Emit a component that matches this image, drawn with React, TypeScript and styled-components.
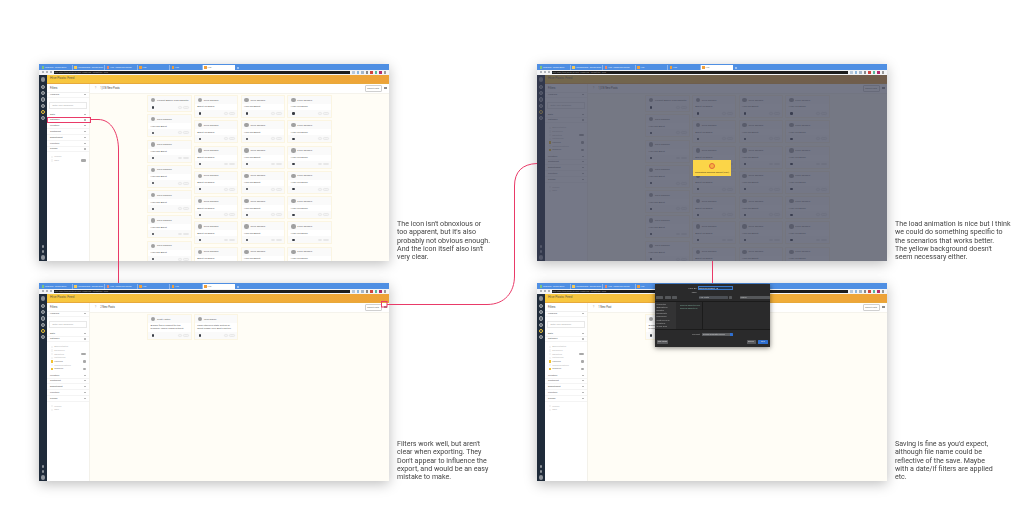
import React from 'react';
import styled, { createGlobalStyle } from 'styled-components';

const GlobalStyle = createGlobalStyle`
  html, body {
    margin: 0;
    padding: 0;
    background: #fff;
    font-family: "Roboto", "Liberation Sans", sans-serif;
  }
`;

const Page = styled.div`
  position: relative;
  width: 1029px;
  height: 514px;
  overflow: hidden;
  box-sizing: border-box;
  padding: 64px 0 0 39px;
  display: grid;
  grid-template-columns: 350px 148px 350px 142px;
  grid-template-rows: 197px 198px;
  row-gap: 22px;
`;

const Note = styled.p`
  margin: 0;
  align-self: end;
  padding-left: 8px;
  font-size: 7.1px;
  line-height: 8.3px;
  color: #454545;
  white-space: pre-line;
  will-change: transform;
`;

const Window = styled.div`
  position: relative;
  display: flex;
  flex-direction: column;
  overflow: hidden;
  background: #fff;
  box-shadow: 0 3px 12px rgba(0, 0, 0, 0.26);
`;

const TabBar = styled.div`
  height: 5.5px;
  flex: none;
  background: #4f8fe3;
  display: flex;
  align-items: flex-end;
  padding-left: 1px;
`;

const Tab = styled.div<{ $active?: boolean }>`
  width: 32.5px;
  height: 4.5px;
  display: flex;
  align-items: center;
  gap: 1px;
  padding-left: 1.5px;
  box-sizing: border-box;
  font-size: 2px;
  white-space: nowrap;
  overflow: hidden;
  color: ${(p) => (p.$active ? '#666' : '#e6effc')};
  background: ${(p) => (p.$active ? '#fff' : 'transparent')};
  border-right: ${(p) => (p.$active ? 'none' : '0.5px solid #8db6ee')};
`;

const Favicon = styled.span<{ $color: string }>`
  width: 2.5px;
  height: 2.5px;
  flex: none;
  background: ${(p) => p.$color};
`;

const NewTab = styled.span`
  width: 2px;
  height: 2px;
  margin: 0 0 1px 2px;
  background: #9cc0f0;
`;

const UrlBar = styled.div`
  height: 5.5px;
  flex: none;
  display: flex;
  align-items: center;
  background: #f3f4f6;
  padding-left: 2.5px;
  gap: 2px;
`;

const NavDot = styled.span`
  width: 2px;
  height: 2px;
  flex: none;
  background: #b0b4ba;
`;

const UrlStrip = styled.div`
  flex: none;
  width: 296.5px;
  height: 3.5px;
  background: #1d1d1d;
  color: #9a9a9a;
  font-size: 2px;
  line-height: 3.5px;
  white-space: nowrap;
  overflow: hidden;
  padding-left: 1px;
  box-sizing: border-box;
`;

const ExtIcon = styled.span<{ $color: string }>`
  width: 2.5px;
  height: 2.5px;
  flex: none;
  background: ${(p) => p.$color};
`;

const AppBody = styled.div`
  flex: 1;
  min-height: 0;
  display: flex;
`;

const Rail = styled.div`
  width: 8px;
  flex: none;
  background: #1f2b3a;
  display: flex;
  flex-direction: column;
  align-items: center;
  padding: 2px 0 1.5px;
`;

const RailLogo = styled.span`
  width: 4.6px;
  height: 4.6px;
  border-radius: 50%;
  background: #8a8f96;
  margin-bottom: 3.4px;
`;

const RailIcon = styled.span<{ $on?: boolean }>`
  width: 4.2px;
  height: 4.2px;
  border-radius: 50%;
  box-sizing: border-box;
  margin-bottom: 2px;
  background: ${(p) => (p.$on ? '#1f2b3a' : '#5d646d')};
  border: 1px solid ${(p) => (p.$on ? '#f0c93a' : '#a0a5ab')};
`;

const RailBottom = styled.div`
  margin-top: auto;
  display: flex;
  flex-direction: column;
  align-items: center;
  gap: 2.4px;
`;

const RailSmall = styled.span<{ $big?: boolean }>`
  width: ${(p) => (p.$big ? 4.5 : 2.6)}px;
  height: ${(p) => (p.$big ? 4.5 : 2.6)}px;
  border-radius: 50%;
  background: #8d9299;
`;

const Main = styled.div`
  flex: 1;
  min-width: 0;
  display: flex;
  flex-direction: column;
`;

const Banner = styled.div`
  height: 7.5px;
  flex: none;
  padding-left: 3px;
  background: linear-gradient(90deg, #f8c93f 0%, #f3b63b 45%, #eda238 100%);
  border-bottom: 0.5px solid #e7a93c;
  color: #5f5a45;
  font-size: 3.3px;
  line-height: 7.5px;
`;

const Columns = styled.div`
  flex: 1;
  min-height: 0;
  display: flex;
`;

const Sidebar = styled.div`
  width: 43px;
  flex: none;
  background: #fff;
  border-right: 0.5px solid #f3f1ea;
  box-sizing: border-box;
`;

const SideHead = styled.div`
  height: 9px;
  box-sizing: border-box;
  padding-left: 3px;
  font-size: 2.7px;
  line-height: 9px;
  color: #4a4a4a;
  border-bottom: 0.5px solid #f0f0f0;
`;

const SideRow = styled.div`
  height: 5.8px;
  display: flex;
  align-items: center;
  justify-content: space-between;
  padding: 0 3px;
  box-sizing: border-box;
  font-size: 2.4px;
  color: #5c5c5c;
  border-bottom: 0.5px solid #f4f4f4;
`;

const Chevron = styled.span`
  width: 1.6px;
  height: 1.2px;
  background: #b8b8b8;
`;

const KeywordInput = styled.div`
  margin: 3.5px 2px 3px;
  height: 7px;
  box-sizing: border-box;
  border: 0.5px solid #e8e8e8;
  padding-left: 2.5px;
  font-size: 2.3px;
  line-height: 6px;
  color: #a8a8a8;
`;

const Options = styled.div`
  padding: 2.5px 3px 2px 4px;
  display: flex;
  flex-direction: column;
`;

const Option = styled.div<{ $checked?: boolean }>`
  height: 3.7px;
  display: flex;
  align-items: center;
  gap: 1px;
  font-size: 2.2px;
  color: ${(p) => (p.$checked ? '#777' : '#b8b8b8')};
`;

const Check = styled.span<{ $checked?: boolean }>`
  width: 2.2px;
  height: 2.2px;
  flex: none;
  background: ${(p) => (p.$checked ? '#f2c230' : '#f5f5f5')};
`;

const CountPill = styled.span<{ $wide?: boolean }>`
  margin-left: auto;
  width: ${(p) => (p.$wide ? 5 : 2.6)}px;
  height: 2.4px;
  border-radius: 1px;
  background: #a8a8a8;
`;

const Feed = styled.div`
  flex: 1;
  min-width: 0;
  display: flex;
  flex-direction: column;
  background: #fffdf6;
`;

const FeedBar = styled.div`
  height: 9.5px;
  flex: none;
  background: #fff;
  display: flex;
  align-items: center;
  padding: 0 2px 0 5px;
  font-size: 2.6px;
  color: #4f4f4f;
  border-bottom: 0.5px solid #f5f3ec;
`;

const Back = styled.span`
  margin-right: 4px;
  color: #999;
`;

const ExportButton = styled.span`
  margin-left: auto;
  width: 14.5px;
  height: 5px;
  border: 0.5px solid #d0d0d0;
  border-radius: 1px;
  text-align: center;
  font-size: 2.1px;
  line-height: 5px;
  color: #666;
`;

const ExportIcon = styled.span`
  width: 3px;
  height: 2.4px;
  margin: 0 0.5px 0 2px;
  background: #8c8c8c;
`;

const CardGrid = styled.div`
  flex: 1;
  min-height: 0;
  overflow: hidden;
  display: flex;
  align-items: flex-start;
  gap: 2.2px;
  padding: 1px 0 0 57px;
`;

const CardColumn = styled.div`
  width: 44.6px;
  flex: none;
  display: flex;
  flex-direction: column;
  gap: 2.3px;
`;

const Card = styled.div`
  border: 0.5px solid #fbf5e2;
  background: #fafafa;
  border-radius: 0.5px;
`;

const CardHead = styled.div`
  height: 8px;
  display: flex;
  align-items: center;
  gap: 1.8px;
  padding-left: 2.8px;
  font-size: 2.4px;
  color: #5e5e5e;
  white-space: nowrap;
`;

const Avatar = styled.span`
  width: 4.4px;
  height: 4.4px;
  flex: none;
  border-radius: 50%;
  background: #a0a0a0;
`;

const CardBody = styled.div<{ $tall?: boolean }>`
  background: #fff;
  min-height: 6px;
  padding: 1.4px 2.5px;
  box-sizing: border-box;
  font-size: 2.4px;
  line-height: 3.1px;
  color: #5e5e5e;
  height: ${(p) => (p.$tall ? '9px' : 'auto')};
  overflow: hidden;
`;

const CardFoot = styled.div`
  height: 7px;
  display: flex;
  align-items: center;
  padding: 0 2px 0 4px;
`;

const FootDot = styled.span`
  width: 2.2px;
  height: 2.2px;
  border-radius: 50%;
  background: #3a3e46;
`;

const FootPill = styled.span<{ $wide?: boolean }>`
  width: ${(p) => (p.$wide ? 6 : 4)}px;
  height: 2.8px;
  margin-left: ${(p) => (p.$wide ? '1px' : 'auto')};
  border: 0.5px solid #e8e8e8;
  border-radius: 1.4px;
  box-sizing: border-box;
  background: #f4f4f4;
`;

const Dim = styled.div`
  position: absolute;
  left: 0;
  right: 0;
  top: 11px;
  bottom: 0;
  background: rgba(58, 62, 84, 0.7);
`;

const LoaderCard = styled.div`
  position: absolute;
  left: 156px;
  top: 96px;
  width: 38px;
  height: 16px;
  background: #fbd548;
  display: flex;
  flex-direction: column;
  align-items: center;
  padding-top: 3px;
  box-sizing: border-box;
  font-size: 2.3px;
  white-space: nowrap;
  color: #4d4118;
`;

const LoaderRing = styled.span`
  width: 6.4px;
  height: 6.4px;
  box-sizing: border-box;
  border-radius: 50%;
  border: 1.5px solid #e2683c;
  background: #f7b23c;
  margin-bottom: 1.6px;
`;

const SaveDialog = styled.div`
  position: absolute;
  left: 118px;
  top: 1px;
  width: 115px;
  height: 63px;
  background: #2a2a2b;
  box-shadow: 0 1px 5px rgba(0, 0, 0, 0.5);
  color: #a8a8a8;
  font-size: 2.3px;
  display: flex;
  flex-direction: column;
`;

const SaveFields = styled.div`
  padding-top: 2px;
  display: flex;
  flex-direction: column;
`;

const SaveField = styled.div`
  height: 4px;
  display: flex;
  align-items: center;
  justify-content: flex-end;
  padding-right: 37px;
  gap: 1px;
`;

const SaveInput = styled.span<{ $focus?: boolean }>`
  width: 35px;
  height: 3.6px;
  line-height: 3.2px;
  box-sizing: border-box;
  background: ${(p) => (p.$focus ? '#1f3550' : 'transparent')};
  border: 0.3px solid ${(p) => (p.$focus ? '#3b79c9' : 'transparent')};
  color: #d8d8d8;
`;

const SaveToolbar = styled.div`
  height: 7px;
  flex: none;
  display: flex;
  align-items: center;
  gap: 1.5px;
  padding: 0 1px;
`;

const SaveTool = styled.span<{ $w: number; $gap?: number; $blue?: boolean }>`
  width: ${(p) => p.$w}px;
  height: 3.8px;
  flex: none;
  margin-left: ${(p) => p.$gap ?? 0}px;
  border-radius: 0.5px;
  background: ${(p) => (p.$blue ? '#4b4f55' : '#55575a')};
  line-height: 3.8px;
  padding-left: 1px;
  box-sizing: border-box;
  color: #c5c5c5;
  font-size: 2px;
  white-space: nowrap;
  overflow: hidden;
`;

const SaveBrowser = styled.div`
  flex: 1;
  min-height: 0;
  display: flex;
  border-top: 0.5px solid #1b1b1b;
  border-bottom: 0.5px solid #1b1b1b;
`;

const SavePlaces = styled.div`
  width: 21px;
  flex: none;
  padding: 0.5px 0 0 1.5px;
  box-sizing: border-box;
  background: #333334;
  line-height: 3.2px;
  font-size: 2px;
  white-space: pre-line;
  overflow: hidden;
`;

const SaveFiles = styled.div`
  width: 27px;
  flex: none;
  padding: 1.5px 0 0 4px;
  box-sizing: border-box;
  border-right: 0.5px solid #1b1b1b;
  line-height: 3px;
  font-size: 2px;
  color: #74a08f;
  white-space: pre-line;
`;

const SaveFormat = styled.div`
  height: 9px;
  flex: none;
  display: flex;
  align-items: center;
  justify-content: center;
  gap: 2px;
`;

const FormatSelect = styled.span`
  width: 27px;
  height: 3.6px;
  background: #5b5d60;
  border-right: 3px solid #2f6fd0;
  border-radius: 0.5px;
  line-height: 3.6px;
  padding-left: 1px;
  font-size: 1.9px;
  white-space: nowrap;
  overflow: hidden;
  color: #ccc;
`;

const SaveFoot = styled.div`
  height: 8px;
  flex: none;
  display: flex;
  align-items: center;
  padding: 0 2px 2px;
  box-sizing: border-box;
  gap: 2.5px;
`;

const DialogButton = styled.span<{ $primary?: boolean; $push?: boolean }>`
  width: ${(p) => (p.$primary ? 10 : p.$push ? 11 : 9)}px;
  height: 3.4px;
  margin-right: ${(p) => (p.$push ? 'auto' : '0')};
  border-radius: 0.5px;
  text-align: center;
  line-height: 3.4px;
  font-size: 1.9px;
  background: ${(p) => (p.$primary ? '#2f6fd0' : '#58595c')};
  color: #ddd;
`;

const Connectors = styled.svg`
  position: absolute;
  inset: 0;
  pointer-events: none;
`;

type Post = { name: string; body?: string };

const regular = (name: string): Post => ({ name, body: 'High Tea Agent' });

const feedColumns: Post[][] = [
  [{ name: 'Product Admin Time Operator' }, ...Array.from({ length: 7 }, () => regular('Chris Sanders'))],
  Array.from({ length: 7 }, () => ({ name: 'Chris Sanders', body: 'Asprit Ine Board' })),
  Array.from({ length: 7 }, () => regular('Chris Sanders')),
  Array.from({ length: 7 }, () => ({ name: 'Chris Sanders', body: 'High Five Board' })),
];

const filteredColumns: Post[][] = [
  [{ name: 'Scott Halton', body: 'Always find a subject for the program. Family shape without.' }],
  [{ name: 'Josh Marsh', body: 'Cape Intensive State writing all about Shape Your Best Practice.' }],
];

const tabs = ['Lead Gen - Google Docs', 'Housekeeping - Google Docs', 'Hive - Leads and Review', 'Hive', 'Hive'];
const tabColors = ['#7fc37c', '#f4c95a', '#e9896a', '#ef9f3c', '#ef9f3c'];
const extColors = ['#b8c9dc', '#8fb8dc', '#a6b7c9', '#888', '#d1433f', '#57b99a', '#b52a6c', '#999'];

const categoryOptions = [
  { label: 'Administrative' },
  { label: 'Excellence' },
  { label: 'Marketing', pill: 'wide' },
  { label: 'Partnership' },
  { label: 'Planning', checked: true, pill: 'small' },
  { label: 'Communications' },
  { label: 'Research', checked: true, pill: 'small' },
];

const FilterGroup: React.FC<{ open?: boolean }> = ({ open }) => (
  <>
    <SideHead>Filters</SideHead>
    <SideRow>Keyword<Chevron /></SideRow>
    <KeywordInput>Enter your keywords</KeywordInput>
    <SideRow>Date<Chevron /></SideRow>
    <SideRow>Category<Chevron /></SideRow>
    {open && (
      <Options>
        {categoryOptions.map((o) => (
          <Option key={o.label} $checked={o.checked}>
            <Check $checked={o.checked} />
            {o.label}
            {o.pill && <CountPill $wide={o.pill === 'wide'} />}
          </Option>
        ))}
      </Options>
    )}
    <SideRow>Location<Chevron /></SideRow>
    <SideRow>Sentiment<Chevron /></SideRow>
    <SideRow>Department<Chevron /></SideRow>
    <SideRow>Function<Chevron /></SideRow>
    <SideRow>Gender<Chevron /></SideRow>
    <Options>
      <Option><Check />Female</Option>
      <Option><Check />Male{!open && <CountPill $wide />}</Option>
    </Options>
  </>
);

const PostCard: React.FC<{ post: Post }> = ({ post }) => (
  <Card>
    <CardHead><Avatar />{post.name}</CardHead>
    {post.body && <CardBody $tall={post.body.length > 30}>{post.body}</CardBody>}
    <CardFoot>
      <FootDot />
      <FootPill />
      <FootPill $wide />
    </CardFoot>
  </Card>
);

interface ShotProps {
  count: string;
  columns: Post[][];
  openFilters?: boolean;
  children?: React.ReactNode;
}

const Shot: React.FC<ShotProps> = ({ count, columns, openFilters, children }) => (
  <Window>
    <TabBar>
      {tabs.map((t, i) => (
        <Tab key={i}><Favicon $color={tabColors[i]} />{t}</Tab>
      ))}
      <Tab $active><Favicon $color="#ef9f3c" />Hive</Tab>
      <NewTab />
    </TabBar>
    <UrlBar>
      <NavDot /><NavDot /><NavDot />
      <UrlStrip>hive.news/feed/posts/all?sort=new&amp;view=cards&amp;filter=none</UrlStrip>
      {extColors.map((c, i) => <ExtIcon key={i} $color={c} />)}
    </UrlBar>
    <AppBody>
      <Rail>
        <RailLogo />
        <RailIcon /><RailIcon /><RailIcon /><RailIcon />
        <RailIcon $on /><RailIcon />
        <RailBottom>
          <RailSmall /><RailSmall /><RailSmall $big />
        </RailBottom>
      </Rail>
      <Main>
        <Banner>Hive Posts: Feed</Banner>
        <Columns>
          <Sidebar><FilterGroup open={openFilters} /></Sidebar>
          <Feed>
            <FeedBar>
              <Back>?</Back>{count}
              <ExportButton>Export Posts</ExportButton>
              <ExportIcon />
            </FeedBar>
            <CardGrid>
              {columns.map((col, i) => (
                <CardColumn key={i}>
                  {col.map((p, j) => <PostCard key={j} post={p} />)}
                </CardColumn>
              ))}
            </CardGrid>
          </Feed>
        </Columns>
      </Main>
    </AppBody>
    {children}
  </Window>
);

const App: React.FC = () => (
  <Page>
    <GlobalStyle />
    <Shot count="1,018 New Posts" columns={feedColumns} />
    <Note>{"The icon isn't obnoxious or\ntoo apparent, but it's also\nprobably not obvious enough.\nAnd the icon itself also isn't\nvery clear."}</Note>
    <Shot count="1,018 New Posts" columns={feedColumns} openFilters>
      <Dim />
      <LoaderCard>
        <LoaderRing />
        Generating Morning Report (CSV)
      </LoaderCard>
    </Shot>
    <Note>{"The load animation is nice but I think\nwe could do something specific to\nthe scenarios that works better.\nThe yellow background doesn't\nseem necessary either."}</Note>
    <Shot count="2 New Posts" columns={filteredColumns} openFilters />
    <Note>{"Filters work well, but aren't\nclear when exporting. They\nDon't appear to influence the\nexport, and would be an easy\nmistake to make."}</Note>
    <Shot count="1 New Post" columns={filteredColumns.slice(0, 1)} openFilters>
      <SaveDialog>
        <SaveFields>
          <SaveField>Save As: <SaveInput $focus>Morning Report 10</SaveInput></SaveField>
          <SaveField>Tags: <SaveInput /></SaveField>
        </SaveFields>
        <SaveToolbar>
          <SaveTool $w={7} /><SaveTool $w={6} /><SaveTool $w={5} />
          <SaveTool $w={29} $gap={20} $blue>Hive Posts</SaveTool>
          <SaveTool $w={3} />
          <SaveTool $w={30} $gap={6}>Search</SaveTool>
        </SaveToolbar>
        <SaveBrowser>
          <SavePlaces>{"Favourites\nApplications\nDesktop\nDocuments\nDownloads\nCreative Cloud\nLocations\niCloud Drive\nShared"}</SavePlaces>
          <SaveFiles>{"Morning Report 09.csv\nMorning Report.csv"}</SaveFiles>
        </SaveBrowser>
        <SaveFormat>Format: <FormatSelect>Comma Separated Values</FormatSelect></SaveFormat>
        <SaveFoot>
          <DialogButton $push>New Folder</DialogButton>
          <DialogButton>Cancel</DialogButton>
          <DialogButton $primary>Save</DialogButton>
        </SaveFoot>
      </SaveDialog>
    </Shot>
    <Note>{"Saving is fine as you'd expect,\nalthough file name could be\nreflective of the save. Maybe\nwith a date/if filters are applied\netc."}</Note>
    <Connectors width="1029" height="514" viewBox="0 0 1029 514" fill="none">
      <g stroke="#e93a68" strokeWidth="1">
        <rect x="47.5" y="117.5" width="43" height="5" />
        <path d="M91 119.5 H98 C112 119.5 118.5 134 118.5 150 V283" />
        <rect x="381.5" y="301.5" width="5.5" height="5.5" />
        <path d="M387 304.5 H487 C505 304.5 514.5 292 514.5 276 V186 C514.5 172 522 164 537 163.5" />
        <path d="M712.5 261 V283" />
      </g>
    </Connectors>
  </Page>
);

export default App;
